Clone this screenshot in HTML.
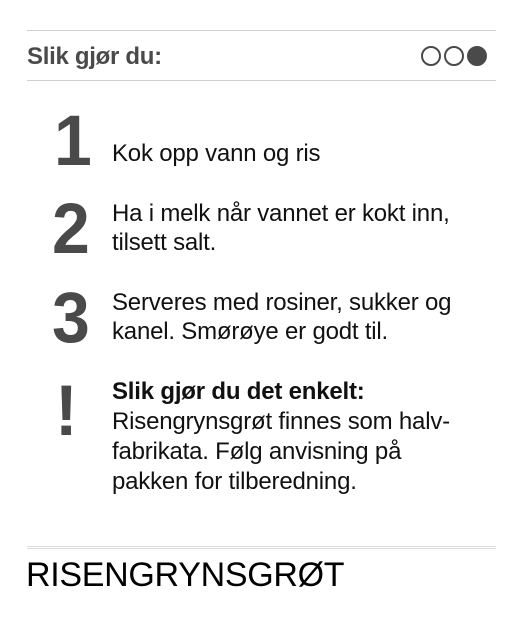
<!DOCTYPE html>
<html><head><meta charset="utf-8"><style>
body{margin:0;width:525px;height:636px;background:#fff;font-family:"Liberation Sans",Arial,sans-serif;position:relative;overflow:hidden}
.a{position:absolute}
.line{position:absolute;left:27px;width:469px;height:1px;background:#cfcfcf}
.h{left:27px;top:43px;font-size:24px;font-weight:bold;color:#4a4a4a;letter-spacing:-0.3px}
.c{top:46px;box-sizing:border-box;width:20px;height:20px;border-radius:50%;border:2px solid #4a4a4a}
.n{font-size:68px;font-weight:bold;color:#4a4a4a;line-height:1;transform:scaleY(1.05);transform-origin:top}
.t{left:112px;font-size:24px;line-height:29px;color:#111;letter-spacing:-0.2px}
</style></head><body>
<div class="line" style="top:30px"></div>
<div class="a h">Slik gjør du:</div>
<div class="a c" style="left:421px"></div>
<div class="a c" style="left:444px"></div>
<div class="a c" style="left:467px;background:#4a4a4a"></div>
<div class="line" style="top:80px"></div>

<div class="a n" style="left:54px;top:105px">1</div>
<div class="a t" style="top:139px">Kok opp vann og ris</div>

<div class="a n" style="left:52px;top:193px">2</div>
<div class="a t" style="top:199px">Ha i melk når vannet er kokt inn,<br>tilsett salt.</div>

<div class="a n" style="left:52px;top:282px">3</div>
<div class="a t" style="top:288px">Serveres med rosiner, sukker og<br>kanel. Smørøye er godt til.</div>

<div class="a n" style="left:55px;top:375px">!</div>
<div class="a t" style="top:377px;line-height:30px"><b>Slik gjør du det enkelt:</b><br>Risengrynsgrøt finnes som halv-<br>fabrikata. Følg anvisning på<br>pakken for tilberedning.</div>

<div class="line" style="top:546px;background:#ddd"></div>
<div class="line" style="top:548px;background:#ddd"></div>
<div class="a" style="left:26px;top:556px;font-size:34px;color:#000;letter-spacing:-0.3px">RISENGRYNSGRØT</div>
</body></html>
